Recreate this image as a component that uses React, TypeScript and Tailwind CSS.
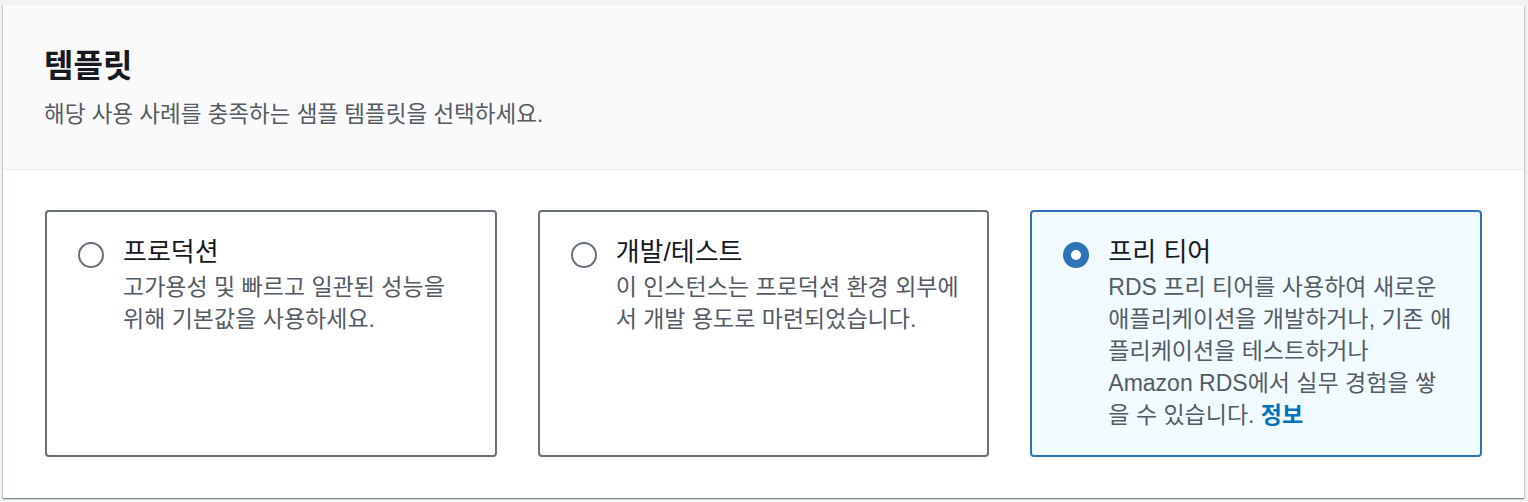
import { useState } from 'react';

interface Template {
  id: string;
  title: string;
  description: string;
  info?: boolean;
}

const templates: Template[] = [
  {
    id: 'production',
    title: '프로덕션',
    description: '고가용성 및 빠르고 일관된 성능을 위해 기본값을 사용하세요.',
  },
  {
    id: 'dev-test',
    title: '개발/테스트',
    description: '이 인스턴스는 프로덕션 환경 외부에서 개발 용도로 마련되었습니다.',
  },
  {
    id: 'free-tier',
    title: '프리 티어',
    description:
      'RDS 프리 티어를 사용하여 새로운 애플리케이션을 개발하거나, 기존 애플리케이션을 테스트하거나 Amazon RDS에서 실무 경험을 쌓을 수 있습니다.',
    info: true,
  },
];

function Radio({ checked }: { checked: boolean }) {
  if (checked) {
    return (
      <span className="flex h-[26px] w-[26px] shrink-0 items-center justify-center rounded-full bg-[#2e73b8]">
        <span className="block h-[10px] w-[10px] rounded-full bg-white" />
      </span>
    );
  }
  return <span className="block h-[26px] w-[26px] shrink-0 rounded-full border-2 border-[#687078] bg-white" />;
}

export default function App() {
  const [selected, setSelected] = useState('free-tier');

  return (
    <div
      className="h-[502px] bg-[#f2f3f3] pt-[5px] pl-[3px] pr-[4px] pb-[4px]"
      style={{ fontFamily: '"Liberation Sans", "Noto Sans CJK KR", sans-serif' }}
    >
      <div className="flex h-full flex-col bg-white shadow-[0_1px_1px_0_rgba(0,28,36,0.3),1px_1px_1px_0_rgba(0,28,36,0.15),-1px_1px_1px_0_rgba(0,28,36,0.15)]">
        {/* Header */}
        <div className="h-[165px] border-b border-[#eaeded] bg-[#fafafa] px-[41px] pt-[41px]">
          <h2 className="text-[32px] leading-[40px] font-bold text-[#16191f]">템플릿</h2>
          <p className="mt-[14px] text-[22.5px] leading-[30px] text-[#545b64]">
            해당 사용 사례를 충족하는 샘플 템플릿을 선택하세요.
          </p>
        </div>

        {/* Tiles */}
        <div className="grid grid-cols-3 gap-[41px] px-[42px] pt-[40px]">
          {templates.map((t) => {
            const isSelected = t.id === selected;
            return (
              <div
                key={t.id}
                onClick={() => setSelected(t.id)}
                className={
                  isSelected
                    ? 'flex h-[247px] cursor-pointer gap-[19px] rounded-[4px] border-2 border-[#2e73b8] bg-[#f1faff] pt-[23px] pr-[26px] pl-[31px]'
                    : 'flex h-[247px] cursor-pointer gap-[19px] rounded-[4px] border-2 border-[#687078] bg-white pt-[23px] pr-[26px] pl-[31px]'
                }
              >
                <div className="pt-[7px]">
                  <Radio checked={isSelected} />
                </div>
                <div className="min-w-0 flex-1">
                  <div className="text-[26px] leading-[34px] text-[#16191f]">{t.title}</div>
                  <p className="mt-[2px] text-[23px] leading-[32px] text-[#545b64]">
                    {t.description}
                    {t.info && (
                      <>
                        {' '}
                        <span className="font-bold text-[#0073bb]">정보</span>
                      </>
                    )}
                  </p>
                </div>
              </div>
            );
          })}
        </div>
      </div>
    </div>
  );
}
